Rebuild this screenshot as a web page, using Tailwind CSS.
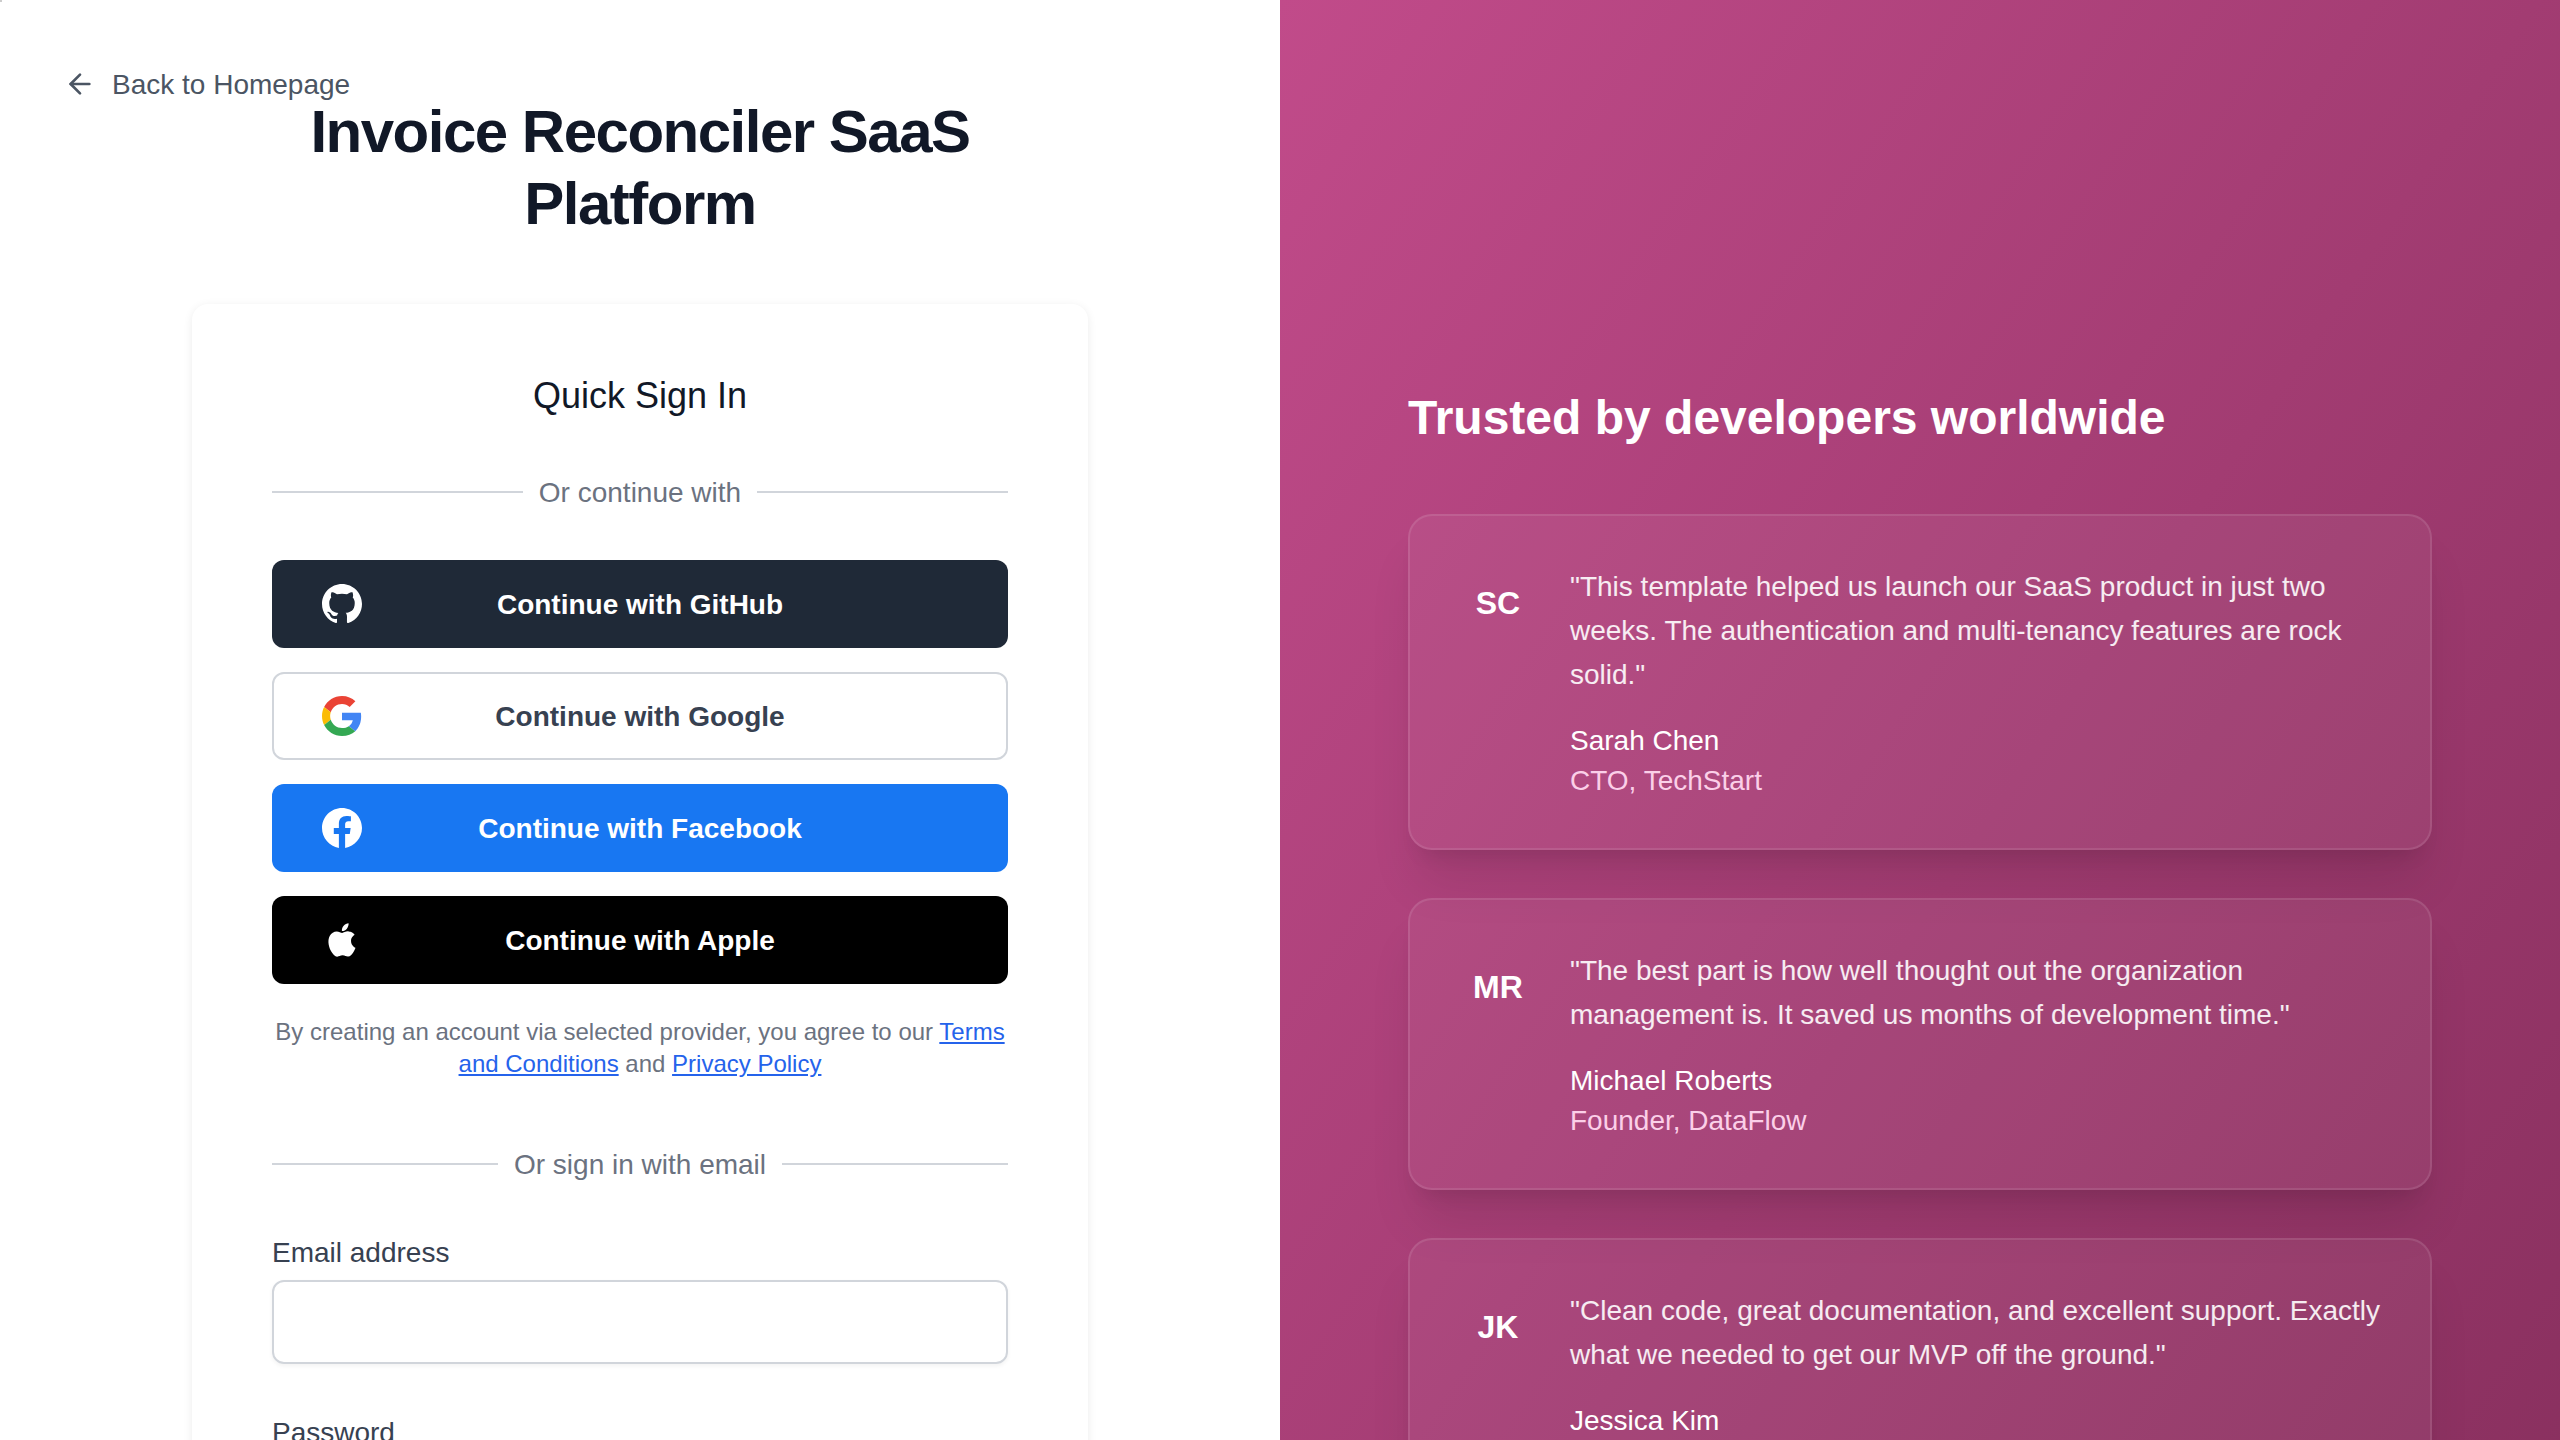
<!DOCTYPE html>
<html lang="en">
<head>
<meta charset="utf-8">
<title>Sign in</title>
<script src="https://cdn.jsdelivr.net/npm/@tailwindcss/browser@4"></script>
</head>
<body class="h-[1440px] w-[2560px] overflow-hidden bg-white font-['Liberation_Sans',Arial,sans-serif] text-[28px] leading-[40px]">
<div class="relative flex h-[1440px] overflow-hidden">
  <span class="absolute top-0 left-0 size-0.5 bg-[#cccccc]"></span>
  <main class="flex w-1/2 flex-col items-center pt-24">
    <a class="absolute top-16 left-16 flex items-center gap-4 text-[#4b5563]">
      <svg class="size-8" viewBox="0 0 24 24" fill="none" stroke="currentColor" stroke-width="2" stroke-linecap="round" stroke-linejoin="round"><path d="m12 19-7-7 7-7"/><path d="M19 12H5"/></svg>
      <span class="-mb-px pt-px">Back to Homepage</span>
    </a>
    <h1 class="w-[896px] text-center text-[60px] leading-[72px] font-bold tracking-[-0.025em] text-[#111827]">Invoice Reconciler SaaS Platform</h1>
    <section class="mt-16 h-[1516px] w-[896px] shrink-0 rounded-2xl bg-white px-20 py-16 shadow-[0_2px_10px_0_rgb(0_0_0/0.08)]">
      <h2 class="text-center text-[36px] leading-[56px] text-[#111827]">Quick Sign In</h2>
      <div class="mt-12 flex items-center gap-4 text-[#6b7280]">
        <span class="h-0.5 flex-1 bg-[#d1d5db]"></span><span class="-mb-px pt-px">Or continue with</span><span class="h-0.5 flex-1 bg-[#d1d5db]"></span>
      </div>
      <div class="mt-12 flex flex-col gap-6 text-center font-bold text-white">
        <button class="grid h-[88px] grid-cols-[40px_1fr_40px] items-center rounded-xl bg-[#1f2937] px-[50px]">
          <svg class="size-10" viewBox="0 0 20 20" fill="currentColor"><path fill-rule="evenodd" clip-rule="evenodd" d="M10 0C4.477 0 0 4.484 0 10.017c0 4.425 2.865 8.18 6.839 9.504.5.092.682-.217.682-.483 0-.237-.008-.868-.013-1.703-2.782.605-3.369-1.343-3.369-1.343-.454-1.158-1.11-1.466-1.11-1.466-.908-.62.069-.608.069-.608 1.003.07 1.531 1.032 1.531 1.032.892 1.53 2.341 1.088 2.91.832.092-.647.35-1.088.636-1.338-2.22-.253-4.555-1.113-4.555-4.951 0-1.093.39-1.988 1.029-2.688-.103-.253-.446-1.272.098-2.65 0 0 .84-.27 2.75 1.026A9.564 9.564 0 0110 4.844c.85.004 1.705.115 2.504.337 1.909-1.296 2.747-1.027 2.747-1.027.546 1.379.203 2.398.1 2.651.64.7 1.028 1.595 1.028 2.688 0 3.848-2.339 4.695-4.566 4.942.359.31.678.921.678 1.856 0 1.338-.012 2.419-.012 2.747 0 .268.18.58.688.482A10.019 10.019 0 0020 10.017C20 4.484 15.522 0 10 0z"/></svg>
          <span class="-mb-px pt-px">Continue with GitHub</span>
        </button>
        <button class="grid h-[88px] grid-cols-[40px_1fr_40px] items-center rounded-xl border-2 border-[#d1d5db] bg-white px-12 text-[#374151]">
          <svg class="size-10" viewBox="0 0 48 48"><path fill="#EA4335" d="M24 9.5c3.54 0 6.71 1.22 9.21 3.6l6.85-6.85C35.9 2.38 30.47 0 24 0 14.62 0 6.51 5.38 2.56 13.22l7.98 6.19C12.43 13.72 17.74 9.5 24 9.5z"/><path fill="#4285F4" d="M46.98 24.55c0-1.57-.15-3.09-.38-4.55H24v9.02h12.94c-.58 2.96-2.26 5.48-4.78 7.18l7.73 6c4.51-4.18 7.09-10.36 7.09-17.65z"/><path fill="#FBBC05" d="M10.53 28.59c-.48-1.45-.76-2.99-.76-4.59s.27-3.14.76-4.59l-7.98-6.19C.92 16.46 0 20.12 0 24c0 3.88.92 7.54 2.56 10.78l7.97-6.19z"/><path fill="#34A853" d="M24 48c6.48 0 11.93-2.13 15.89-5.81l-7.73-6c-2.15 1.45-4.92 2.3-8.16 2.3-6.26 0-11.57-4.22-13.47-9.91l-7.98 6.19C6.51 42.62 14.62 48 24 48z"/></svg>
          <span class="-mb-px pt-px">Continue with Google</span>
        </button>
        <button class="grid h-[88px] grid-cols-[40px_1fr_40px] items-center rounded-xl bg-[#1877f2] px-[50px]">
          <svg class="size-10" viewBox="0 0 24 24" fill="currentColor"><path d="M24 12.073c0-6.627-5.373-12-12-12s-12 5.373-12 12c0 5.99 4.388 10.954 10.125 11.854v-8.385H7.078v-3.47h3.047V9.43c0-3.007 1.792-4.669 4.533-4.669 1.312 0 2.686.235 2.686.235v2.953H15.83c-1.491 0-1.956.925-1.956 1.874v2.25h3.328l-.532 3.47h-2.796v8.385C19.612 23.027 24 18.062 24 12.073z"/></svg>
          <span class="-mb-px pt-px">Continue with Facebook</span>
        </button>
        <button class="grid h-[88px] grid-cols-[40px_1fr_40px] items-center rounded-xl bg-black px-[50px]">
          <svg class="size-10" viewBox="0 0 24 24" fill="currentColor"><path d="M18.71 19.5c-.83 1.24-1.71 2.45-3.05 2.47-1.34.03-1.77-.79-3.29-.79-1.53 0-2 .77-3.27.82-1.31.05-2.3-1.32-3.14-2.53C4.25 17 2.94 12.45 4.7 9.39c.87-1.52 2.43-2.48 4.12-2.51 1.28-.02 2.5.87 3.29.87.78 0 2.26-1.07 3.81-.91.65.03 2.47.26 3.64 1.98-.09.06-2.17 1.28-2.15 3.81.03 3.02 2.65 4.03 2.68 4.04-.03.07-.42 1.44-1.38 2.83M13 3.5c.73-.83 1.94-1.46 2.94-1.5.13 1.17-.34 2.35-1.04 3.19-.69.85-1.83 1.51-2.95 1.42-.15-1.15.41-2.35 1.05-3.11z"/></svg>
          <span class="-mb-px pt-px">Continue with Apple</span>
        </button>
      </div>
      <p class="mt-8 text-center text-[24px] leading-8 text-[#6b7280]">By creating an account via selected provider, you agree to our <a class="text-[#2563eb] underline">Terms and Conditions</a> and <a class="text-[#2563eb] underline">Privacy Policy</a></p>
      <div class="mt-16 flex items-center gap-4 text-[#6b7280]">
        <span class="h-0.5 flex-1 bg-[#d1d5db]"></span><span class="-mb-px pt-px">Or sign in with email</span><span class="h-0.5 flex-1 bg-[#d1d5db]"></span>
      </div>
      <form class="mt-12 flex flex-col text-[#374151]">
        <label class="-mb-px pt-px">Email address</label>
        <input class="mt-2 h-[84px] rounded-xl border-2 border-[#d1d5db] shadow-[0_2px_4px_0_rgb(0_0_0/0.05)]">
        <label class="mt-12 -mb-px pt-px">Password</label>
        <input class="mt-2 h-[84px] rounded-xl border-2 border-[#d1d5db]">
      </form>
    </section>
  </main>
  <aside class="h-[1916px] w-1/2 bg-linear-to-br from-[#c14b8a] to-[#832d5a] px-32 pt-[386px] text-white">
    <h2 class="text-[48px] leading-[64px] font-bold">Trusted by developers worldwide</h2>
    <div class="mt-16 flex flex-col gap-12">
      <article class="flex gap-8 rounded-3xl border-2 border-white/10 bg-white/5 p-12 shadow-[0_40px_50px_-10px_rgb(0_0_0/0.1),0_16px_20px_-12px_rgb(0_0_0/0.1)]">
        <div class="grid size-20 shrink-0 place-items-center pb-0.5 text-[32px] font-bold">SC</div>
        <div class="-mb-px pt-px"><p class="mb-6 leading-[44px] text-white/90">"This template helped us launch our SaaS product in just two weeks. The authentication and multi-tenancy features are rock solid."</p><p>Sarah Chen</p><p class="text-[#fbcfe8]">CTO, TechStart</p></div>
      </article>
      <article class="flex gap-8 rounded-3xl border-2 border-white/10 bg-white/5 p-12 shadow-[0_40px_50px_-10px_rgb(0_0_0/0.1),0_16px_20px_-12px_rgb(0_0_0/0.1)]">
        <div class="grid size-20 shrink-0 place-items-center pb-0.5 text-[32px] font-bold">MR</div>
        <div class="-mb-px pt-px"><p class="mb-6 leading-[44px] text-white/90">"The best part is how well thought out the organization management is. It saved us months of development time."</p><p>Michael Roberts</p><p class="text-[#fbcfe8]">Founder, DataFlow</p></div>
      </article>
      <article class="flex gap-8 rounded-3xl border-2 border-white/10 bg-white/5 p-12 shadow-[0_40px_50px_-10px_rgb(0_0_0/0.1),0_16px_20px_-12px_rgb(0_0_0/0.1)]">
        <div class="grid size-20 shrink-0 place-items-center pb-0.5 text-[32px] font-bold">JK</div>
        <div class="-mb-px pt-px"><p class="mb-6 leading-[44px] text-white/90">"Clean code, great documentation, and excellent support. Exactly what we needed to get our MVP off the ground."</p><p>Jessica Kim</p></div>
      </article>
    </div>
  </aside>
</div>
</body>
</html>
